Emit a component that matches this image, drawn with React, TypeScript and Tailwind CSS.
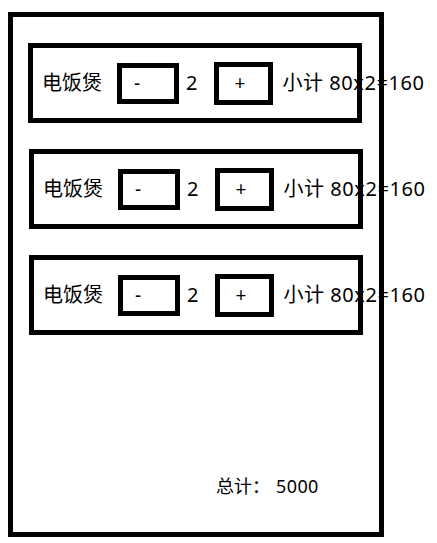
const items = [
  { name: "电饭煲", count: 2, price: 80 },
  { name: "电饭煲", count: 2, price: 80 },
  { name: "电饭煲", count: 2, price: 80 },
];

export default function App() {
  return (
    <div className="bg-white w-[437px] h-[543px] pt-3 pl-2 text-black font-['Noto_Sans','Noto_Sans_CJK_SC',sans-serif]">
      <div className="w-[376px] h-[525px] border-[5px] border-black flex flex-col gap-[26px] pt-[26px]">
        {items.map((item, i) => (
          <div
            key={i}
            className={
              "w-[334px] h-20 shrink-0 border-[5px] border-black flex items-center pl-[9px] whitespace-nowrap text-[20px] " +
              (i === 0 ? "ml-[15px]" : "ml-4")
            }
          >
            <span className="shrink-0">{item.name}</span>
            <button className="shrink-0 ml-[15px] w-[62px] h-[41px] border-[5px] border-black text-left pl-[12px] text-[19px] leading-none">
              -
            </button>
            <span className="shrink-0 ml-[7px]">{item.count}</span>
            <button className="shrink-0 ml-[17px] w-[59px] h-[43px] border-[5px] border-black text-left pl-[15px] text-[19px] leading-none">
              +
            </button>
            <span className="shrink-0 ml-[9px] tracking-[0.55px]">
              小计 {item.price}x{item.count}={item.price * item.count}
            </span>
          </div>
        ))}
        <div className="mt-auto pb-[34px] pl-[203px] text-[18px] leading-6 whitespace-nowrap">
          总计：<span className="ml-[6px] tracking-[0.4px]">5000</span>
        </div>
      </div>
    </div>
  );
}
